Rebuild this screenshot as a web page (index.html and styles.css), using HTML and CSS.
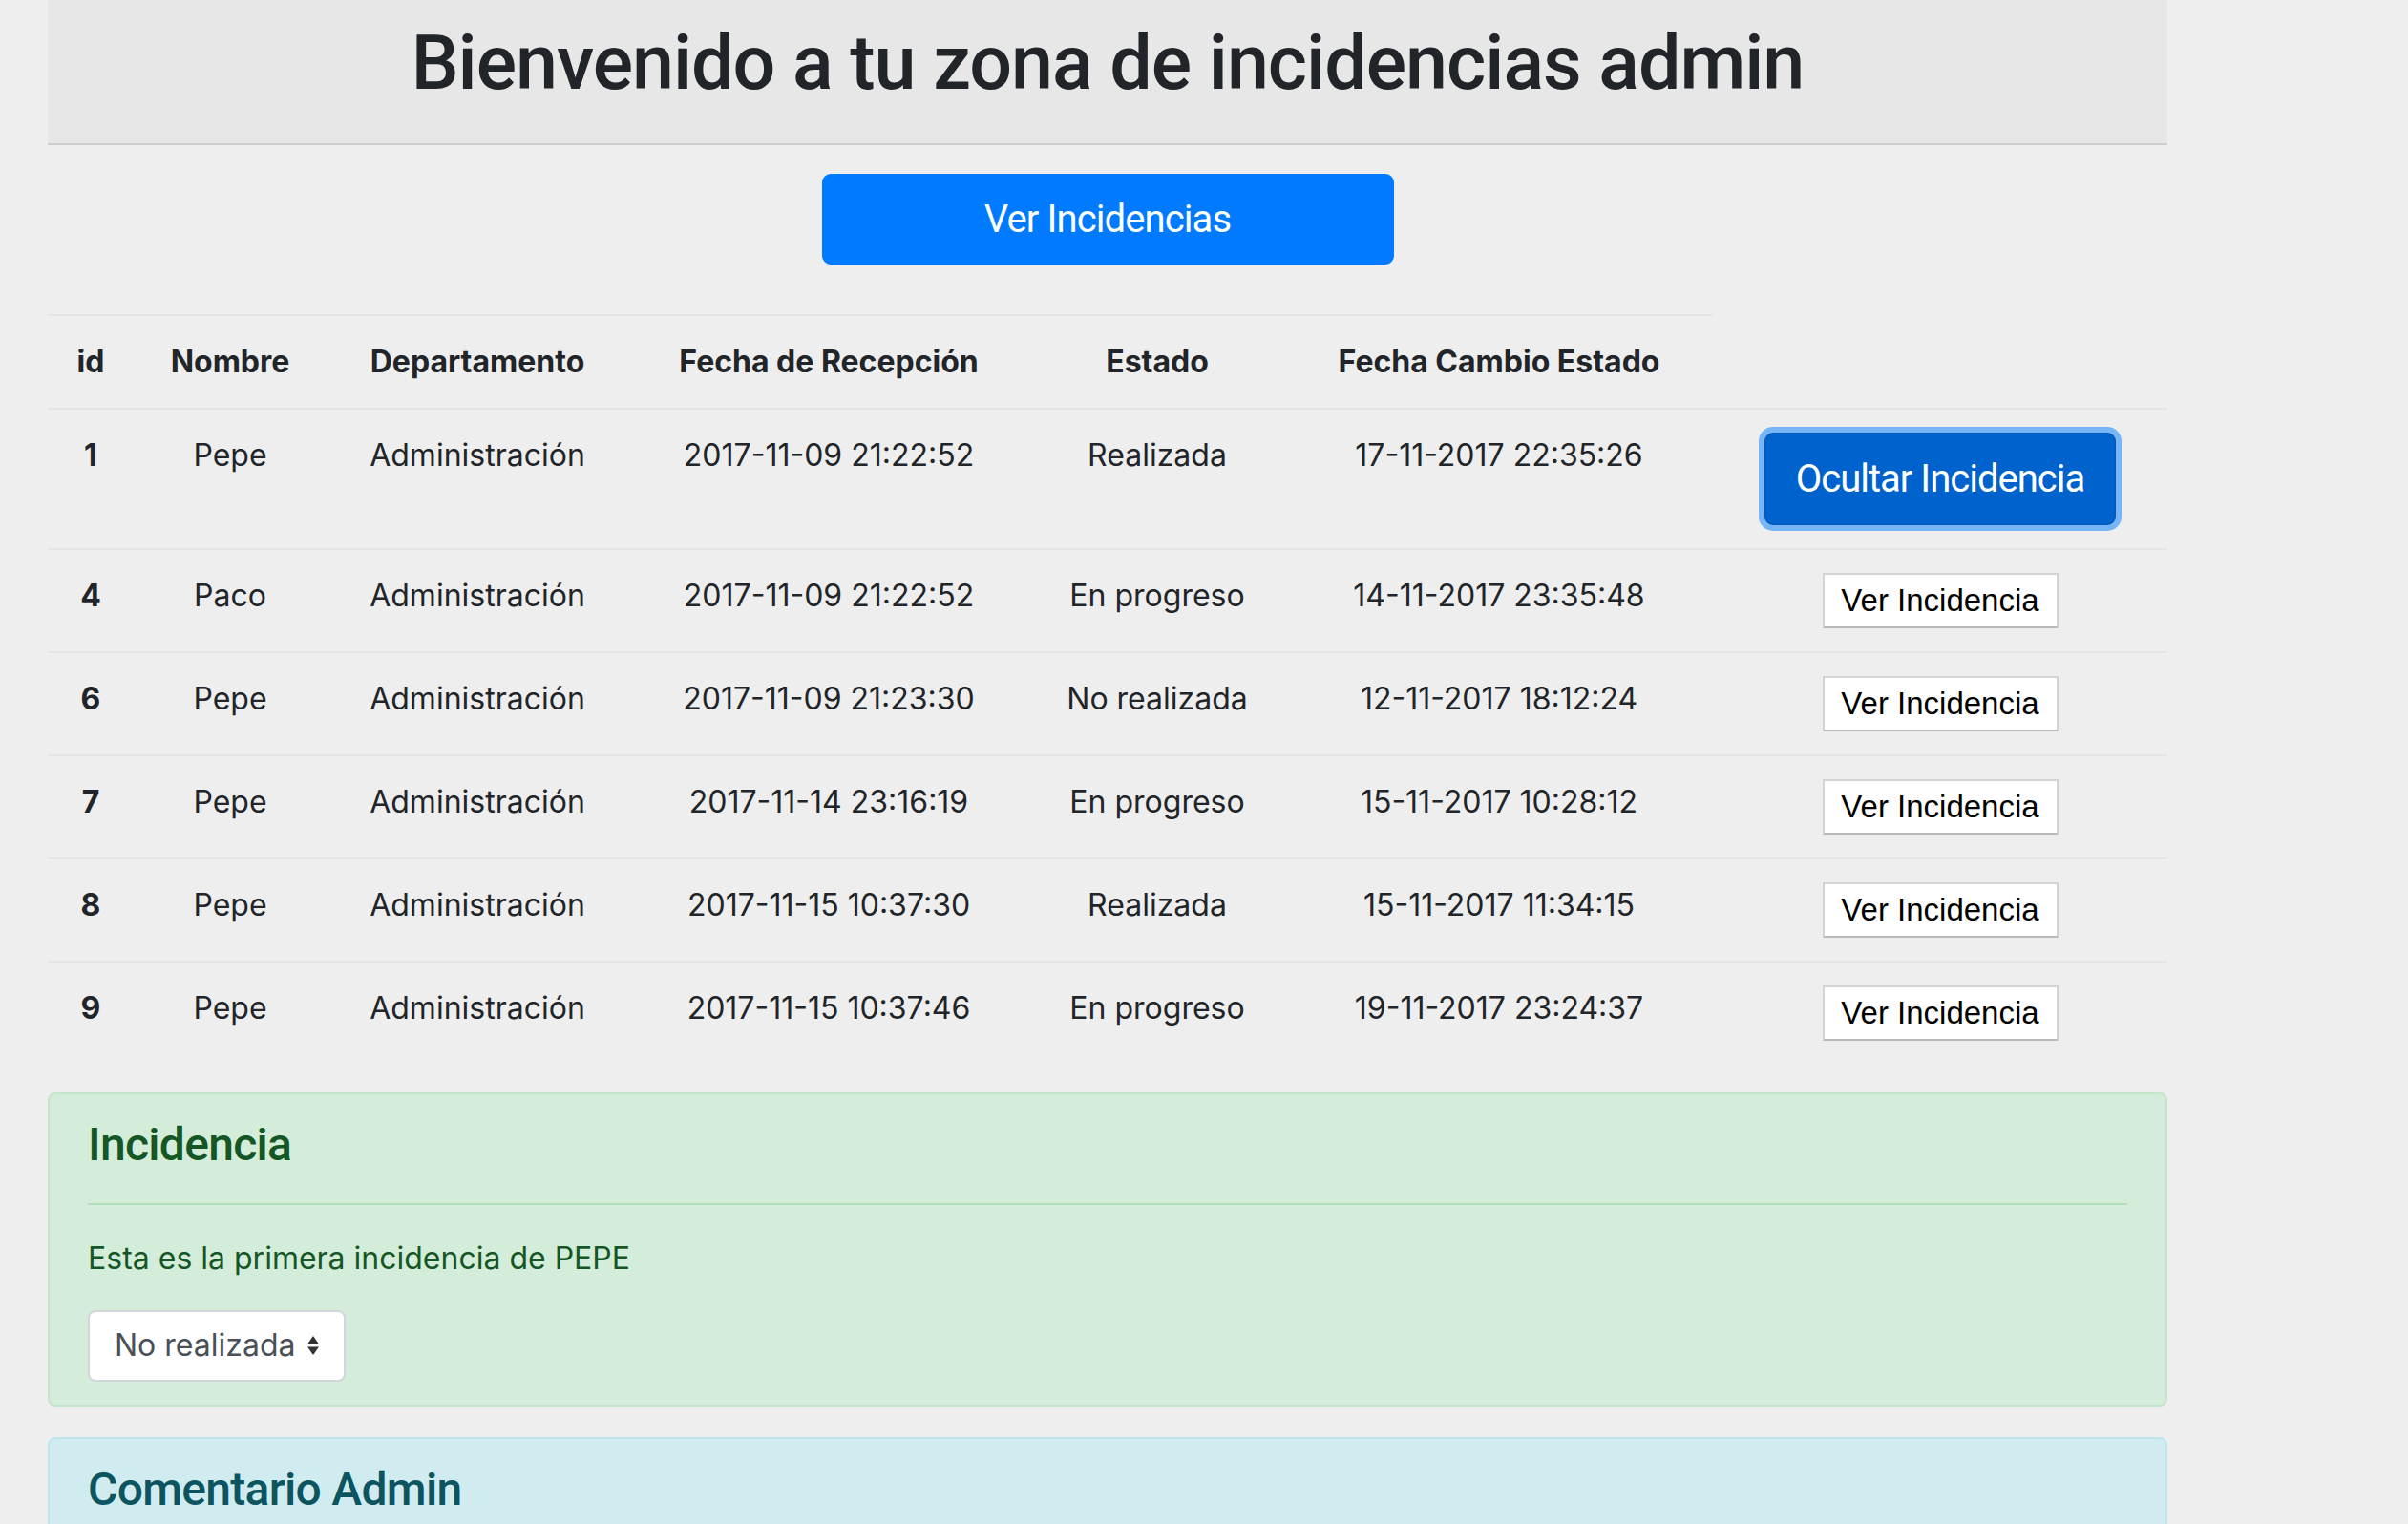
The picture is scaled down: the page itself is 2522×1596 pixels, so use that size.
FILE: index.html
```html
<!DOCTYPE html>
<html lang="es">
<head>
<meta charset="utf-8">
<title>Zona de incidencias admin</title>
<link rel="stylesheet" href="styles.css">
</head>
<body>
<div class="page">
  <header class="jumbo">
    <h1 class="title">Bienvenido a tu zona de incidencias admin</h1>
  </header>

  <button class="btn-main" type="button">Ver Incidencias</button>

  <table class="tabla">
    <colgroup>
      <col class="c-id"><col class="c-nombre"><col class="c-dep"><col class="c-fecha"><col class="c-estado"><col class="c-cambio"><col class="c-accion">
    </colgroup>
    <thead>
      <tr>
        <th>id</th>
        <th>Nombre</th>
        <th>Departamento</th>
        <th>Fecha de Recepción</th>
        <th>Estado</th>
        <th>Fecha Cambio Estado</th>
      </tr>
    </thead>
    <tbody>
      <tr>
        <th class="rid">1</th><td>Pepe</td><td>Administración</td><td>2017-11-09 21:22:52</td><td>Realizada</td><td>17-11-2017 22:35:26</td>
        <td><button class="btn-ocultar" type="button">Ocultar Incidencia</button></td>
      </tr>
      <tr>
        <th class="rid">4</th><td>Paco</td><td>Administración</td><td>2017-11-09 21:22:52</td><td>En progreso</td><td>14-11-2017 23:35:48</td>
        <td><button class="btn-ver" type="button">Ver Incidencia</button></td>
      </tr>
      <tr>
        <th class="rid">6</th><td>Pepe</td><td>Administración</td><td>2017-11-09 21:23:30</td><td>No realizada</td><td>12-11-2017 18:12:24</td>
        <td><button class="btn-ver" type="button">Ver Incidencia</button></td>
      </tr>
      <tr>
        <th class="rid">7</th><td>Pepe</td><td>Administración</td><td>2017-11-14 23:16:19</td><td>En progreso</td><td>15-11-2017 10:28:12</td>
        <td><button class="btn-ver" type="button">Ver Incidencia</button></td>
      </tr>
      <tr>
        <th class="rid">8</th><td>Pepe</td><td>Administración</td><td>2017-11-15 10:37:30</td><td>Realizada</td><td>15-11-2017 11:34:15</td>
        <td><button class="btn-ver" type="button">Ver Incidencia</button></td>
      </tr>
      <tr>
        <th class="rid">9</th><td>Pepe</td><td>Administración</td><td>2017-11-15 10:37:46</td><td>En progreso</td><td>19-11-2017 23:24:37</td>
        <td><button class="btn-ver" type="button">Ver Incidencia</button></td>
      </tr>
    </tbody>
  </table>

  <section class="alert alert-success">
    <h4 class="alert-heading">Incidencia</h4>
    <hr class="alert-rule">
    <p class="alert-text">Esta es la primera incidencia de PEPE</p>
    <div class="estado-select">
      <span class="estado-value">No realizada</span>
      <svg class="estado-arrows" width="14" height="22" viewBox="0 0 14 22" aria-hidden="true">
        <polygon points="1,9.5 7,1 13,9.5" fill="#333"/>
        <polygon points="1,12.5 7,21 13,12.5" fill="#333"/>
      </svg>
    </div>
  </section>

  <section class="alert alert-info">
    <h4 class="alert-heading">Comentario Admin</h4>
    <hr class="alert-rule">
    <p class="alert-text">Sin comentarios</p>
  </section>
</div>
</body>
</html>
```

FILE: styles.css
```css
html, body {
  margin: 0;
  padding: 0;
}

body {
  background: #eeeeee;
  font-family: Inter, "Noto Sans", "Liberation Sans", sans-serif;
  font-size: 32px;
  line-height: 48px;
  color: #212529;
}

.page {
  width: 2220px;
  margin-left: 50px;
  display: flex;
  flex-direction: column;
}

/* Header */
.jumbo {
  background: #e7e7e7;
  border-bottom: 2px solid #cecece;
  padding: 18px 0 36px;
  text-align: center;
}

.title {
  margin: 0;
  font-family: Roboto, "Liberation Sans", sans-serif;
  font-weight: 500;
  font-size: 79px;
  line-height: 96px;
  letter-spacing: -1px;
  color: #212529;
}

/* Main button */
.btn-main {
  align-self: center;
  box-sizing: border-box;
  width: 599px;
  height: 95px;
  margin-top: 30px;
  padding: 0;
  background: #007bff;
  border: 2px solid #007bff;
  border-radius: 9px;
  color: #ffffff;
  font-family: Roboto, "Liberation Sans", sans-serif;
  font-size: 40px;
  font-weight: 400;
  letter-spacing: -0.9px;
  cursor: pointer;
}

/* Table */
.tabla {
  width: 2220px;
  margin-top: 52px;
  margin-bottom: 30px;
  table-layout: fixed;
  border-collapse: separate;
  border-spacing: 0;
}

.c-id { width: 90px; }
.c-nombre { width: 202px; }
.c-dep { width: 316px; }
.c-fecha { width: 420px; }
.c-estado { width: 268px; }
.c-cambio { width: 448px; }
.c-accion { width: 476px; }

.tabla th,
.tabla td {
  padding: 24px;
  border-top: 2px solid #e3e6e9;
  text-align: center;
  vertical-align: top;
  font-size: 32px;
  line-height: 48px;
  white-space: nowrap;
}

.tabla thead th {
  font-weight: 700;
}

.tabla .rid {
  font-weight: 700;
}

.btn-ocultar {
  display: block;
  box-sizing: border-box;
  width: 368px;
  height: 97px;
  margin: 0 auto;
  padding: 0;
  background: #0062cc;
  border: 2px solid #005cbf;
  border-radius: 9px;
  box-shadow: 0 0 0 6px rgba(0, 123, 255, 0.5);
  color: #ffffff;
  font-family: Roboto, "Liberation Sans", sans-serif;
  font-size: 40px;
  font-weight: 400;
  letter-spacing: -1px;
}

.btn-ver {
  display: block;
  box-sizing: border-box;
  width: 247px;
  height: 58px;
  margin: 0 auto;
  padding: 0;
  background: #ffffff;
  border: 2px solid #d3d3d3;
  border-bottom-color: #b9b9b9;
  border-radius: 0;
  color: #000000;
  font-family: "Liberation Sans", Arial, sans-serif;
  font-size: 33px;
}

/* Alerts */
.alert {
  border: 2px solid transparent;
  border-radius: 8px;
  padding: 24px 40px;
  margin-bottom: 32px;
}

.alert-success {
  background: #d4edda;
  border-color: #c3e6cb;
  color: #155724;
}

.alert-info {
  background: #d1ecf1;
  border-color: #bee5eb;
  color: #0c5460;
}

.alert-heading {
  margin: 0 0 32px;
  font-family: Roboto, "Liberation Sans", sans-serif;
  font-weight: 500;
  font-size: 48px;
  line-height: 57.6px;
  letter-spacing: -0.7px;
}

.alert-rule {
  margin: 0 0 32px;
  border: 0;
  height: 0;
  border-top: 2px solid #b1dfbb;
}

.alert-info .alert-rule {
  border-top-color: #abdde5;
}

.alert-text {
  margin: 0 0 30px;
}

.estado-select {
  box-sizing: border-box;
  width: 270px;
  height: 75px;
  padding: 0 25px 0 26px;
  display: flex;
  align-items: center;
  justify-content: space-between;
  background: #ffffff;
  border: 2px solid #d2d5db;
  border-radius: 8px;
  color: #495057;
}

.estado-arrows {
  display: block;
}
```
